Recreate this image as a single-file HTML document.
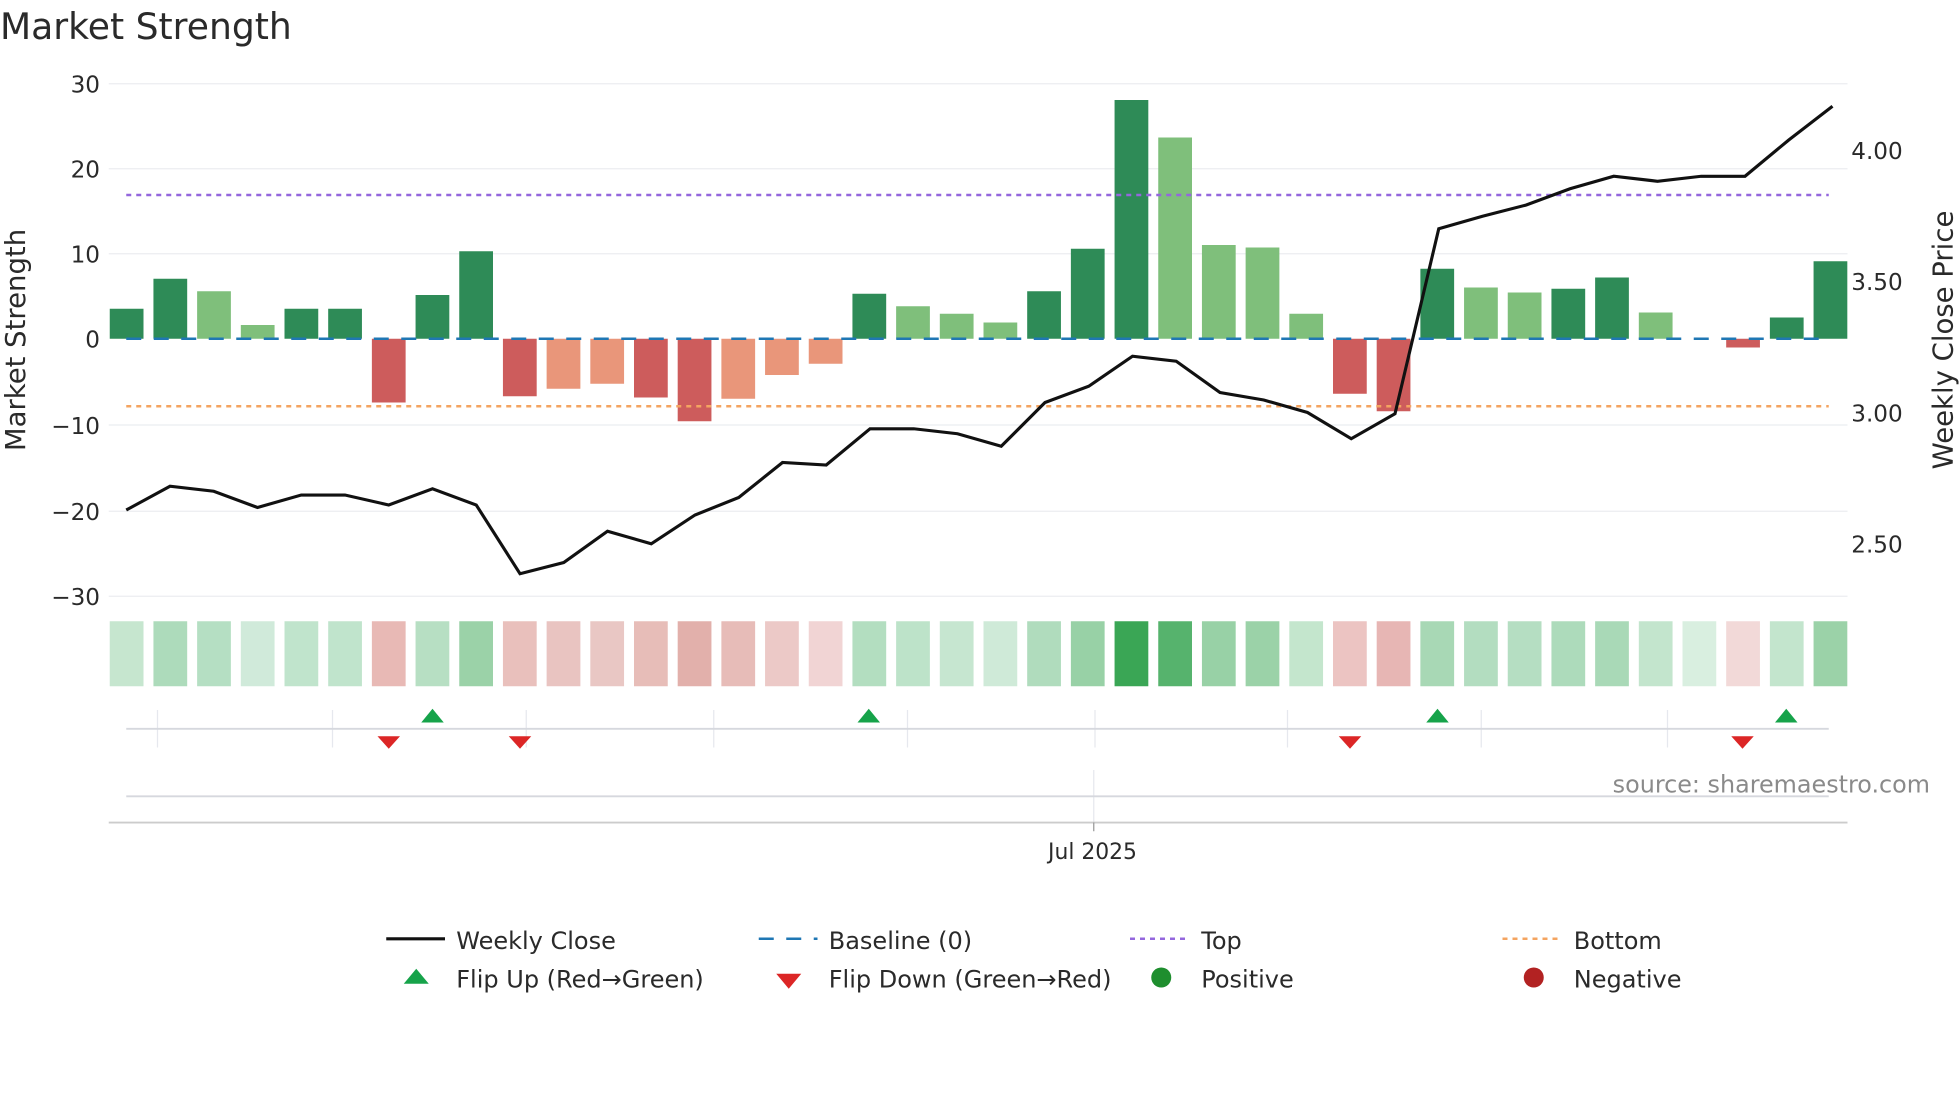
<!DOCTYPE html>
<html><head><meta charset="utf-8"><style>html,body{margin:0;padding:0;background:#fff}svg{display:block}text{font-family:"DejaVu Sans","Liberation Sans",sans-serif}</style></head><body>
<svg width="1960" height="1102" viewBox="0 0 1568 881.6" xmlns="http://www.w3.org/2000/svg">
<rect width="1568" height="882" fill="#fff"/>
<text x="0" y="31" font-size="28.9" fill="#2a2a2a">Market Strength</text>
<g stroke="#ebedf0" stroke-width="1">
<line x1="87" y1="67" x2="1478" y2="67"/><line x1="87" y1="135" x2="1478" y2="135"/><line x1="87" y1="203" x2="1478" y2="203"/><line x1="87" y1="340" x2="1478" y2="340"/><line x1="87" y1="409" x2="1478" y2="409"/><line x1="87" y1="477" x2="1478" y2="477"/>
</g>
<g font-size="18.5" fill="#2a2a2a" text-anchor="end">
<text x="80" y="74">30</text><text x="80" y="142">20</text><text x="80" y="210">10</text><text x="80" y="278">0</text><text x="80" y="347">−10</text><text x="80" y="416">−20</text><text x="80" y="484">−30</text>
</g>
<g font-size="18.5" fill="#2a2a2a">
<text x="1481" y="127">4.00</text><text x="1481" y="232">3.50</text><text x="1481" y="337">3.00</text><text x="1481" y="442">2.50</text>
</g>
<text transform="translate(20,272) rotate(-90)" font-size="22" fill="#2a2a2a" text-anchor="middle">Market Strength</text>
<text transform="translate(1562,272) rotate(-90)" font-size="22" fill="#2a2a2a" text-anchor="middle">Weekly Close Price</text>
<g id="bars"></g>
<line x1="101" y1="271" x2="1463" y2="271" stroke="#1f77b4" stroke-width="2" stroke-dasharray="12,10"/>
<line x1="101" y1="156" x2="1463" y2="156" stroke="#9467dd" stroke-width="2" stroke-dasharray="4,4"/>
<line x1="101" y1="325" x2="1463" y2="325" stroke="#f4a460" stroke-width="2" stroke-dasharray="4,4"/>
<polyline fill="none" stroke="#111" stroke-width="2.5" points="101,408 136,389 171,393 206,406 241,396 276,396 311,404 346,391 381,404 416,459 451,450 486,425 521,435 556,412 591,398 626,370 661,372 696,343 731,343 766,347 801,357 836,322 871,309 906,285 941,289 976,314 1011,320 1046,330 1081,351 1116,331 1151,183 1186,173 1221,164 1256,151 1291,141 1326,145 1361,141 1396,141 1431,112 1466,85"/>
<g id="heat"></g>
<g stroke="#e6e8ee" stroke-width="1">
<line x1="126" y1="568" x2="126" y2="598"/><line x1="266" y1="568" x2="266" y2="598"/><line x1="421" y1="568" x2="421" y2="598"/><line x1="571" y1="568" x2="571" y2="598"/><line x1="726" y1="568" x2="726" y2="598"/><line x1="876" y1="568" x2="876" y2="598"/><line x1="1030" y1="568" x2="1030" y2="598"/><line x1="1185" y1="568" x2="1185" y2="598"/><line x1="1334" y1="568" x2="1334" y2="598"/>
<line x1="875" y1="616" x2="875" y2="658"/>
</g>
<line x1="101" y1="583" x2="1463" y2="583" stroke="#d6d8de" stroke-width="1.5"/>
<line x1="101" y1="637" x2="1463" y2="637" stroke="#d6d8de" stroke-width="1.5"/>
<line x1="87" y1="658" x2="1478" y2="658" stroke="#ccc" stroke-width="1.5"/>
<line x1="875" y1="658" x2="875" y2="665" stroke="#999"/>
<g fill="#16a34a"><path d="M337,578 L355,578 L346,567Z"/><path d="M686,578 L704,578 L695,567Z"/><path d="M1141,578 L1159,578 L1150,567Z"/><path d="M1420,578 L1438,578 L1429,567Z"/></g>
<g fill="#dc2626"><path d="M302,589 L320,589 L311,599Z"/><path d="M407,589 L425,589 L416,599Z"/><path d="M1071,589 L1089,589 L1080,599Z"/><path d="M1385,589 L1403,589 L1394,599Z"/></g>
<text x="1544" y="634" font-size="19.1" fill="#8a8a8a" text-anchor="end">source: sharemaestro.com</text>
<text x="874" y="687" font-size="17.5" fill="#2a2a2a" text-anchor="middle">Jul 2025</text>
<g font-size="19.2" fill="#2a2a2a">
<line x1="309" y1="751" x2="356" y2="751" stroke="#111" stroke-width="2.5"/><text x="365" y="759">Weekly Close</text>
<line x1="607" y1="751" x2="654" y2="751" stroke="#1f77b4" stroke-width="2" stroke-dasharray="12,10"/><text x="663" y="759">Baseline (0)</text>
<line x1="904" y1="751" x2="951" y2="751" stroke="#9467dd" stroke-width="2" stroke-dasharray="4,4"/><text x="961" y="759">Top</text>
<line x1="1202" y1="751" x2="1249" y2="751" stroke="#f4a460" stroke-width="2" stroke-dasharray="4,4"/><text x="1259" y="759">Bottom</text>
<path d="M323,787 L343,787 L333,775Z" fill="#16a34a"/><text x="365" y="790">Flip Up (Red→Green)</text>
<path d="M621,779 L641,779 L631,791Z" fill="#dc2626"/><text x="663" y="790">Flip Down (Green→Red)</text>
<circle cx="929" cy="782" r="8" fill="#1e8e2e"/><text x="961" y="790">Positive</text>
<circle cx="1227" cy="782" r="8" fill="#b22222"/><text x="1259" y="790">Negative</text>
</g>
<script>
var ns="http://www.w3.org/2000/svg";
var v=[[247,'d'],[223,'d'],[233,'l'],[260,'l'],[247,'d'],[247,'d'],[322,'r'],[236,'d'],[201,'d'],[317,'r'],[311,'s'],[307,'s'],[318,'r'],[337,'r'],[319,'s'],[300,'s'],[291,'s'],[235,'d'],[245,'l'],[251,'l'],[258,'l'],[233,'d'],[199,'d'],[80,'d'],[110,'l'],[196,'l'],[198,'l'],[251,'l'],[315,'r'],[329,'r'],[215,'d'],[230,'l'],[234,'l'],[231,'d'],[222,'d'],[250,'l'],[271,'n'],[278,'r'],[254,'d'],[209,'d']];
var col={d:'#2e8b57',l:'#7fbf7b',r:'#cd5c5c',s:'#e9967a',n:'none'};
var heat=['#c6e6cf','#addbbb','#b5dfc3','#d0eada','#c0e4cc','#c0e4cc','#e8b9b5','#b7dfc3','#9bd2a8','#e9c0bc','#e9c4c1','#e9c7c4','#e7bdb8','#e2b0ab','#e7bcb8','#ecc9c7','#f1d4d4','#b3dec0','#bde3c9','#c6e6d0','#cfead8','#b0dcbd','#98d1a6','#3aa655','#56b36d','#98d1a6','#9bd2a8','#c4e6cd','#ecc4c2','#e7b6b4','#a8d8b5','#b3ddc0','#b5dec2','#addbbb','#a9d9b7','#c3e5cd','#d9efe0','#f2d9d8','#c3e5cd','#9bd2a8'];
var gb=document.getElementById('bars'),gh=document.getElementById('heat');
v.forEach(function(b,i){var x=87.8+34.95*i;
if(b[1]!='n'){var r=document.createElementNS(ns,'rect');var y1=Math.min(b[0],271),y2=Math.max(b[0],271);r.setAttribute('x',x);r.setAttribute('y',y1);r.setAttribute('width',27);r.setAttribute('height',y2-y1);r.setAttribute('fill',col[b[1]]);gb.appendChild(r);}
var h=document.createElementNS(ns,'rect');h.setAttribute('x',x);h.setAttribute('y',497);h.setAttribute('width',27);h.setAttribute('height',52);h.setAttribute('fill',heat[i]);gh.appendChild(h);});
</script>
</svg>
</body></html>
